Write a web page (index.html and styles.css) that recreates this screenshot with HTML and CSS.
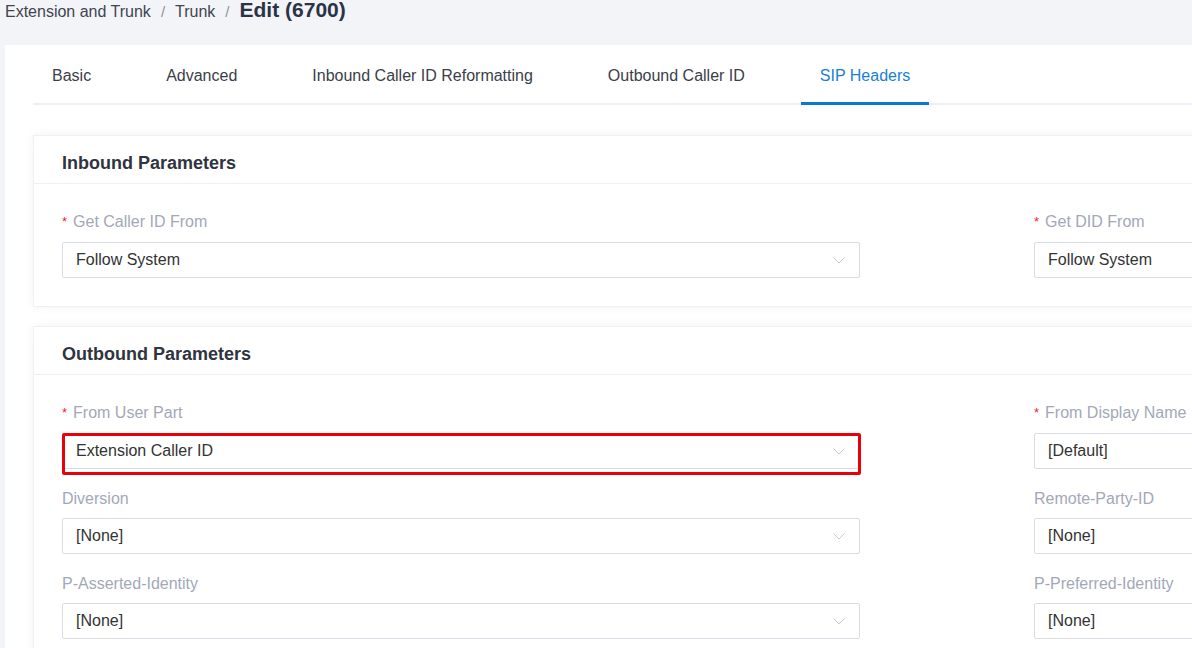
FILE: index.html
```html
<!DOCTYPE html>
<html>
<head>
<meta charset="utf-8">
<link rel="stylesheet" href="styles.css">
</head>
<body>
<div class="breadcrumb">
  <span class="crumb">Extension and Trunk</span>
  <span class="sep">/</span>
  <span class="crumb">Trunk</span>
  <span class="sep">/</span>
  <span class="current">Edit (6700)</span>
</div>
<div class="panel">
  <div class="tabs">
    <div class="tab">Basic</div>
    <div class="tab">Advanced</div>
    <div class="tab">Inbound Caller ID Reformatting</div>
    <div class="tab">Outbound Caller ID</div>
    <div class="tab active">SIP Headers</div>
  </div>

  <div class="card first">
    <div class="card-header">Inbound Parameters</div>
    <div class="card-body">
      <div class="form-item">
        <div class="label"><span class="req">*</span>Get Caller ID From</div>
        <div class="select"><span>Follow System</span><svg class="arrow" width="12" height="7" viewBox="0 0 12 7"><path d="M0.5 0.5 L6 6 L11.5 0.5" fill="none" stroke="#c4c8d0" stroke-width="1"/></svg></div>
      </div>
      <div class="form-item">
        <div class="label"><span class="req">*</span>Get DID From</div>
        <div class="select"><span>Follow System</span><svg class="arrow" width="12" height="7" viewBox="0 0 12 7"><path d="M0.5 0.5 L6 6 L11.5 0.5" fill="none" stroke="#c4c8d0" stroke-width="1"/></svg></div>
      </div>
    </div>
  </div>

  <div class="card">
    <div class="card-header">Outbound Parameters</div>
    <div class="card-body">
      <div class="form-item">
        <div class="label"><span class="req">*</span>From User Part</div>
        <div class="select"><span>Extension Caller ID</span><svg class="arrow" width="12" height="7" viewBox="0 0 12 7"><path d="M0.5 0.5 L6 6 L11.5 0.5" fill="none" stroke="#c4c8d0" stroke-width="1"/></svg><div class="mark"></div></div>
      </div>
      <div class="form-item">
        <div class="label"><span class="req">*</span>From Display Name</div>
        <div class="select"><span>[Default]</span><svg class="arrow" width="12" height="7" viewBox="0 0 12 7"><path d="M0.5 0.5 L6 6 L11.5 0.5" fill="none" stroke="#c4c8d0" stroke-width="1"/></svg></div>
      </div>
      <div class="form-item">
        <div class="label">Diversion</div>
        <div class="select"><span>[None]</span><svg class="arrow" width="12" height="7" viewBox="0 0 12 7"><path d="M0.5 0.5 L6 6 L11.5 0.5" fill="none" stroke="#c4c8d0" stroke-width="1"/></svg></div>
      </div>
      <div class="form-item">
        <div class="label">Remote-Party-ID</div>
        <div class="select"><span>[None]</span><svg class="arrow" width="12" height="7" viewBox="0 0 12 7"><path d="M0.5 0.5 L6 6 L11.5 0.5" fill="none" stroke="#c4c8d0" stroke-width="1"/></svg></div>
      </div>
      <div class="form-item">
        <div class="label">P-Asserted-Identity</div>
        <div class="select"><span>[None]</span><svg class="arrow" width="12" height="7" viewBox="0 0 12 7"><path d="M0.5 0.5 L6 6 L11.5 0.5" fill="none" stroke="#c4c8d0" stroke-width="1"/></svg></div>
      </div>
      <div class="form-item">
        <div class="label">P-Preferred-Identity</div>
        <div class="select"><span>[None]</span><svg class="arrow" width="12" height="7" viewBox="0 0 12 7"><path d="M0.5 0.5 L6 6 L11.5 0.5" fill="none" stroke="#c4c8d0" stroke-width="1"/></svg></div>
      </div>
    </div>
  </div>
</div>
</body>
</html>
```

FILE: styles.css
```css
html, body {
  margin: 0;
  padding: 0;
  overflow: hidden;
  height: 648px;
}
body {
  background: #f3f4f7;
  font-family: "Liberation Sans", Arial, sans-serif;
  color: #333;
  width: 1192px;
}
.breadcrumb {
  display: flex;
  align-items: baseline;
  height: 24px;
  margin-bottom: 21px;
  padding-left: 5px;
  white-space: nowrap;
}
.crumb {
  font-size: 16px;
  color: #3f4450;
  line-height: 20px;
}
.sep {
  font-size: 15px;
  color: #8e939e;
  margin: 0 10px;
}
.current {
  font-size: 21px;
  font-weight: bold;
  color: #2b3346;
  line-height: 20px;
}
.panel {
  margin-left: 5px;
  background: #fff;
  padding-left: 28px;
  width: 1800px;
  height: 700px;
}
.tabs {
  display: flex;
  height: 60px;
  box-shadow: inset 0 -2px 0 #eceff4;
}
.tab {
  box-sizing: border-box;
  height: 60px;
  padding: 1px 19px 0;
  margin-right: 37px;
  line-height: 59px;
  font-size: 16px;
  color: #3a3e49;
  white-space: nowrap;
}
.tab.active {
  color: #1a80d5;
  box-shadow: inset 0 -3px 0 #0a78d2;
}
.card {
  border: 1px solid #eef0f4;
  box-shadow: 0 0 10px rgba(30, 40, 70, 0.05);
  background: #fff;
  margin-top: 19px;
}
.card.first {
  margin-top: 30px;
}
.card-header {
  height: 39px;
  padding-top: 8px;
  line-height: 39px;
  padding-left: 28px;
  border-bottom: 1px solid #eef0f4;
  font-size: 18px;
  font-weight: bold;
  color: #2f3440;
}
.card-body {
  display: grid;
  grid-template-columns: 798px 798px;
  column-gap: 174px;
  row-gap: 19px;
  padding: 27px 28px 28px 28px;
}
.form-item {
  display: flex;
  flex-direction: column;
}
.label {
  font-size: 16px;
  line-height: 21px;
  color: #a3a8b8;
  margin-bottom: 9px;
  white-space: nowrap;
}
.req {
  color: #f5222d;
  font-size: 13px;
  margin-right: 6px;
  position: relative;
  top: -1px;
}
.select {
  position: relative;
  box-sizing: border-box;
  height: 36px;
  border: 1px solid #d9dce4;
  border-radius: 2px;
  display: flex;
  align-items: center;
  justify-content: space-between;
  padding: 0 14px 0 13px;
  font-size: 16px;
  color: #333;
}
.arrow {
  display: block;
}
.mark {
  position: absolute;
  top: -1px;
  left: -1px;
  right: -2px;
  height: 42px;
  box-sizing: border-box;
  border: 3px solid #e8000b;
  border-radius: 2px;
}
```
